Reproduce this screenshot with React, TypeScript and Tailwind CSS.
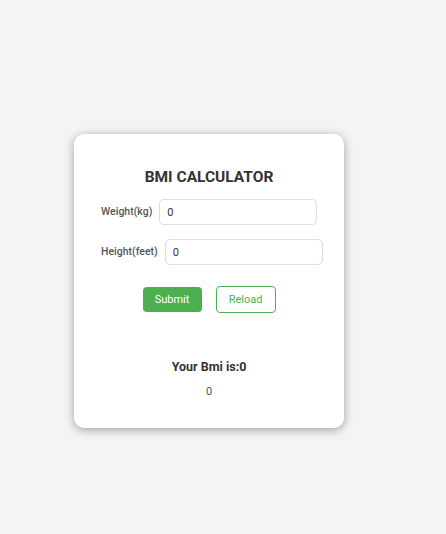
import React from "react";

const App = () => {
  return (
    <div className="min-h-[534px] w-full bg-[#f4f4f4] pt-[134px] pl-[74px] font-['Roboto',sans-serif]">
      <div className="w-[270px] h-[294px] rounded-[10px] bg-white shadow-[0_2px_10px_rgba(0,0,0,0.35)] flex flex-col">
        <h1 className="mt-[32px] text-center text-[15.5px] font-bold text-[#333]">
          BMI CALCULATOR
        </h1>
        <div className="mt-[10px] flex items-center pl-[27px]">
          <label className="text-[10.5px] font-medium text-[#555]">Weight(kg)</label>
          <input
            className="ml-[7px] w-[158px] h-[26px] rounded-[5px] border border-[#ddd] px-[7px] text-[11px] text-[#333] outline-none"
            defaultValue="0"
          />
        </div>
        <div className="mt-[14px] flex items-center pl-[27px]">
          <label className="text-[10.5px] font-medium text-[#555]">Height(feet)</label>
          <input
            className="ml-[7px] w-[158px] h-[26px] rounded-[5px] border border-[#ddd] px-[7px] text-[11px] text-[#333] outline-none"
            defaultValue="0"
          />
        </div>
        <div className="mt-[21px] flex justify-center items-center gap-[14px]">
          <button className="w-[59px] h-[25px] rounded-[4px] bg-[#4caf50] text-white text-[11px]">
            Submit
          </button>
          <button className="w-[60px] h-[27px] rounded-[4px] border-[1.5px] border-[#4caf50] bg-white text-[#4caf50] text-[11px]">
            Reload
          </button>
        </div>
        <h2 className="mt-[45px] text-center text-[12.5px] font-bold text-[#333]">
          Your Bmi is:0
        </h2>
        <p className="mt-[7px] text-center text-[11px] text-[#555]">0</p>
      </div>
    </div>
  );
};

export default App;
